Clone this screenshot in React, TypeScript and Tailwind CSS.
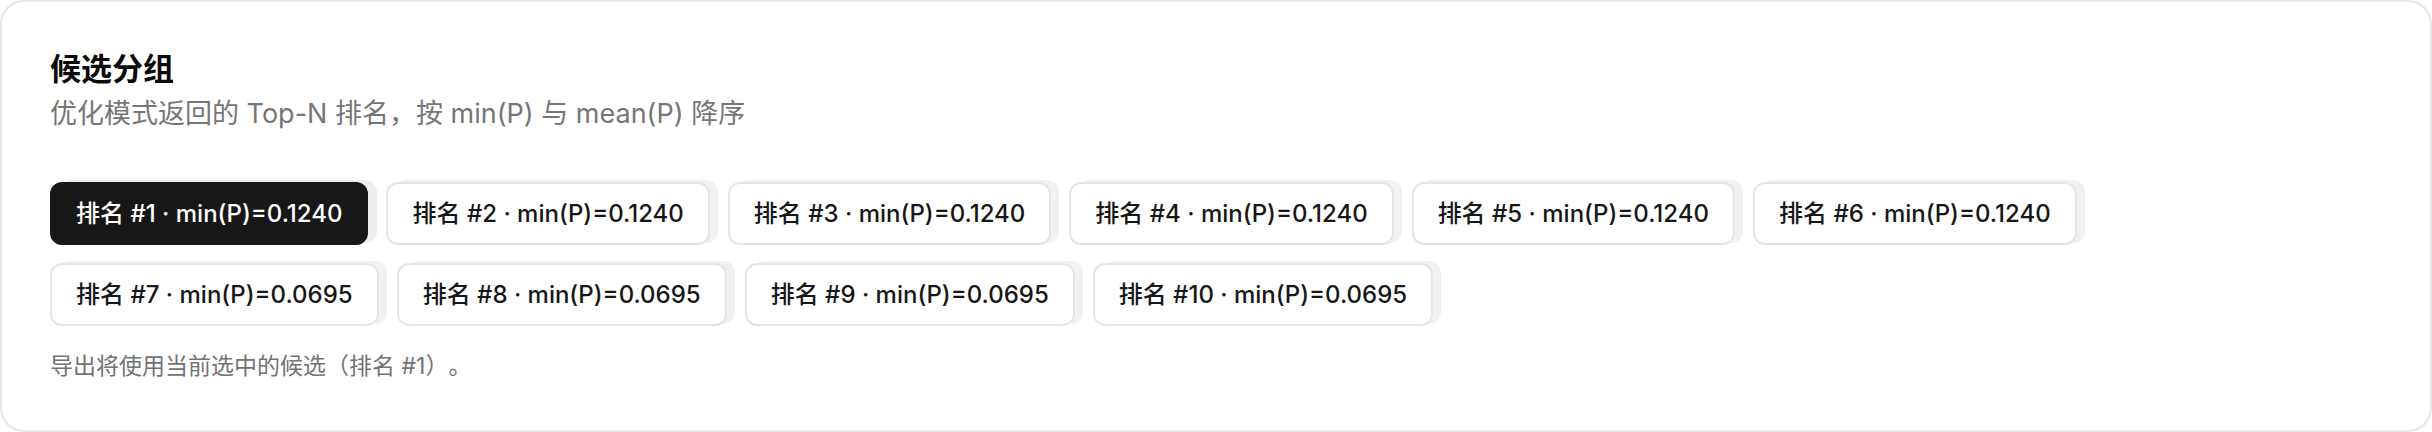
import { useState } from 'react';

type Candidate = { rank: number; minP: string };

const candidates: Candidate[] = [
  { rank: 1, minP: '0.1240' },
  { rank: 2, minP: '0.1240' },
  { rank: 3, minP: '0.1240' },
  { rank: 4, minP: '0.1240' },
  { rank: 5, minP: '0.1240' },
  { rank: 6, minP: '0.1240' },
  { rank: 7, minP: '0.0695' },
  { rank: 8, minP: '0.0695' },
  { rank: 9, minP: '0.0695' },
  { rank: 10, minP: '0.0695' },
];

export default function App() {
  const [selected, setSelected] = useState(1);

  return (
    <div
      className="h-[432px] w-[2432px] bg-white [text-spacing-trim:space-all]"
      style={{ fontFamily: 'Inter, "Noto Sans CJK SC", sans-serif' }}
    >
      <section className="h-full rounded-[24px] border-2 border-[#e5e5e5] bg-white px-[48px] pt-[43px]">
        {/* Header */}
        <h2 className="text-[31px] leading-[47px] font-semibold text-[#0a0a0a]">候选分组</h2>
        <p className="mt-[2px] text-[27px] leading-[40px] text-[#767676]">
          优化模式返回的 Top-N 排名，按 min(P) 与 mean(P) 降序
        </p>

        {/* Candidate buttons */}
        <div className="mt-[48px] flex flex-wrap gap-[18px]">
          {candidates.map((c) => {
            const active = c.rank === selected;
            return (
              <button
                key={c.rank}
                onClick={() => setSelected(c.rank)}
                className={
                  active
                    ? 'h-[63px] rounded-[12px] border-2 border-[#171717] bg-[#171717] px-[24px] text-[24px] font-medium whitespace-nowrap text-white shadow-[9px_-2px_0_0_#ededed]'
                    : 'h-[63px] rounded-[12px] border-2 border-[#e5e5e5] bg-white px-[24px] text-[24px] font-medium whitespace-nowrap text-[#171717] shadow-[8px_-2px_0_0_#f1f1f1]'
                }
              >
                排名 #{c.rank} · min(P)={c.minP}
              </button>
            );
          })}
        </div>

        <p className="mt-[25px] text-[23px] leading-[30px] text-[#737373]">
          导出将使用当前选中的候选（排名 #{selected}）。
        </p>
      </section>
    </div>
  );
}
